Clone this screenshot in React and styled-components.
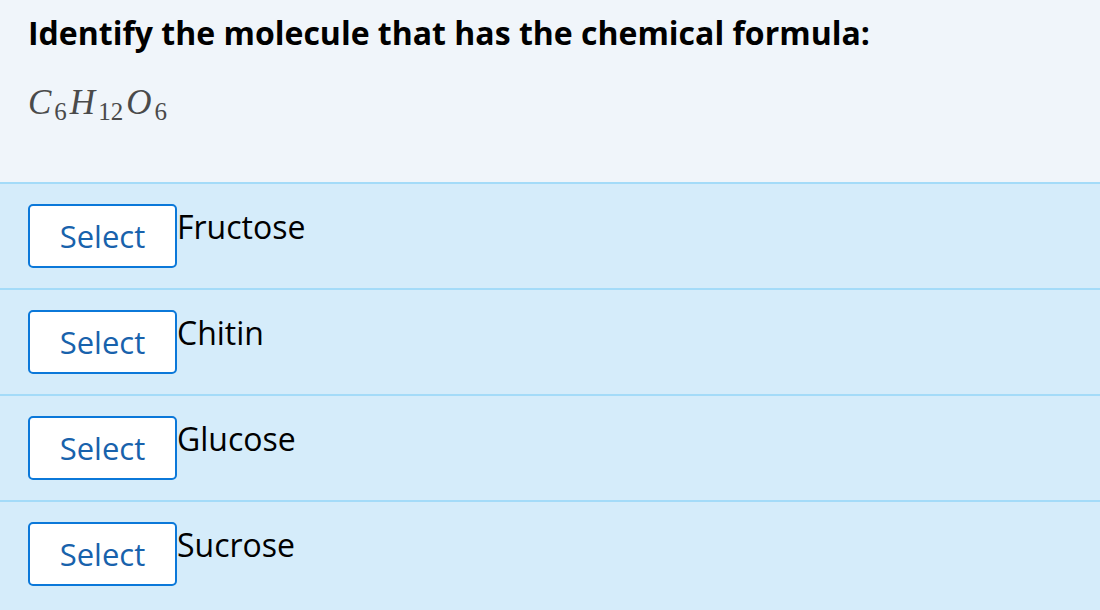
import React from "react";
import styled, { createGlobalStyle } from "styled-components";

const Global = createGlobalStyle`
  html, body { margin: 0; padding: 0; background: #d5ecfa; }
  body { font-family: "Open Sans", "Noto Sans", sans-serif; }
`;

const Page = styled.div`
  width: 1100px;
  height: 610px;
  overflow: hidden;
  background: #d5ecfa;
`;

const Question = styled.div`
  background: #f0f5fa;
  height: 182px;
  box-sizing: border-box;
  padding: 13px 28px 0;
`;

const Title = styled.h1`
  margin: 0;
  font-size: 32px;
  line-height: 40px;
  font-weight: 700;
  color: #000;
`;

const Formula = styled.div`
  margin-top: 30px;
  font-family: "Liberation Serif", "Times New Roman", serif;
  font-size: 35px;
  line-height: 40px;
  color: #4a4a4a;
  i { font-style: italic; margin-right: 2px; }
  sub {
    font-size: 25px;
    vertical-align: -6px;
    line-height: 0;
    margin-left: 1px;
    margin-right: 3px;
  }
`;

const Options = styled.div`
  display: flex;
  flex-direction: column;
`;

const Row = styled.div`
  display: flex;
  align-items: flex-start;
  border-top: 2px solid #a4dbf8;
  padding: 20px 28px 0;
  box-sizing: border-box;
  height: 106px;
`;

const SelectButton = styled.button`
  width: 149px;
  height: 64px;
  box-sizing: border-box;
  background: #fff;
  border: 2px solid #0b78d9;
  border-radius: 5px;
  font-family: "Open Sans", "Noto Sans", sans-serif;
  font-size: 31px;
  color: #1862ac;
  padding: 0;
  cursor: pointer;
`;

const Label = styled.span`
  font-size: 32px;
  line-height: 36px;
  margin-top: 5px;
  color: #000;
`;

const options = ["Fructose", "Chitin", "Glucose", "Sucrose"];

export default function App() {
  return (
    <Page>
      <Global />
      <Question>
        <Title>Identify the molecule that has the chemical formula:</Title>
        <Formula>
          <i>C</i><sub>6</sub><i>H</i><sub>12</sub><i>O</i><sub>6</sub>
        </Formula>
      </Question>
      <Options>
        {options.map((o) => (
          <Row key={o}>
            <SelectButton>Select</SelectButton>
            <Label>{o}</Label>
          </Row>
        ))}
      </Options>
    </Page>
  );
}
